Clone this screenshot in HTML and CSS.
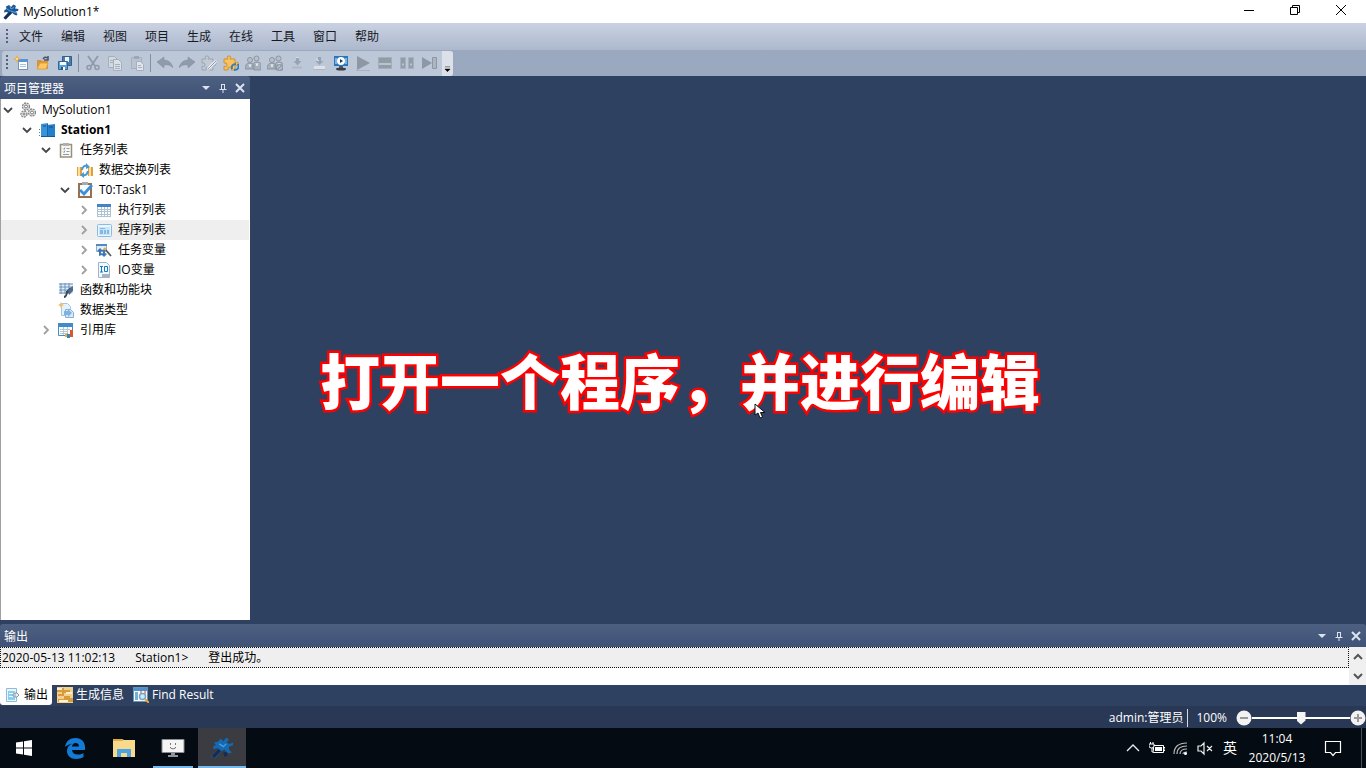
FILE: index.html
```html
<!DOCTYPE html>
<html lang="zh-CN">
<head>
<meta charset="utf-8">
<title>MySolution1*</title>
<link rel="stylesheet" href="styles.css">
</head>
<body>
<svg class="sprite" aria-hidden="true">
  <symbol id="logo" viewBox="0 0 16 16"><path d="M6 1l2 2 2.500-2.500L13 2l-1 2.500 3.500.500-.5 2-2.500.5 2 2.500-1 1.500-2.500-1-1.500-1.500-2 1L3 15.500.5 14l4.500-5.500L3.500 8 1 8.500l.5-2.500 2-1L3 2.500z" fill="#1c5795"/><path d="M7 2l1 3 3-1.500M4 5l3 2 4 1 3 1" fill="none" stroke="#5fa0dc"/><path d="M1.500 14.500L8 8.500" stroke="#17304f" stroke-width="2.500"/></symbol>
  <symbol id="new" viewBox="0 0 16 16"><rect x="5.500" y="4.500" width="9" height="10" fill="#fff" stroke="#7792b5"/><path d="M5 4h10v3H5z" fill="#5d94cf"/><path d="M7 9.500h6M7 11.500h6" stroke="#a4c6e4"/><path d="M4 0l1 3 3 1-3 1-1 3-1-3-3-1 3-1z" fill="#f3a72f"/><circle cx="4" cy="4" r="1" fill="#fff0a0"/></symbol>
  <symbol id="open" viewBox="0 0 16 16"><path d="M2 14V5h4l1 1h6v8z" fill="#d5943a"/><path d="M2 14l3-6h8l-2 6z" fill="#ffc867" stroke="#e49e37"/><path d="M8 4q2-3 4-1M9 5h4V1" fill="none" stroke="#4c5260" stroke-width="1.500"/></symbol>
  <symbol id="save" viewBox="0 0 16 16"><path d="M5.500 1.500h9v9h-9z" fill="#447ead" stroke="#315e8d"/><path d="M8 2h4v5H8z" fill="#eef5fb"/><path d="M1.500 6.500h9v8h-9z" fill="#58a4da" stroke="#2f6697"/><path d="M3 7h6v3H3zM4 12h4v3H4z" fill="#fff"/><path d="M4 12h2v3H4z" fill="#305577"/></symbol>
  <symbol id="cut" viewBox="0 0 16 16"><path d="M3 1l7 10M13 1L6 11" stroke="#8f99a7" stroke-width="1.800"/><circle cx="4" cy="12.500" r="2" fill="none" stroke="#8f99a7" stroke-width="1.500"/><circle cx="12" cy="12.500" r="2" fill="none" stroke="#8f99a7" stroke-width="1.500"/></symbol>
  <symbol id="copy" viewBox="0 0 16 16"><path d="M1.500 1.500h6l3 3v8h-9z" fill="#d0d8e2" stroke="#a5afbc"/><path d="M6.500 4.500h5l3 3v8h-8z" fill="#dae0e7" stroke="#a5afbc"/><path d="M3 5.500h3M3 7.500h3M8 9.500h5M8 11.500h5M8 13.500h5" stroke="#a5afbc"/></symbol>
  <symbol id="paste" viewBox="0 0 16 16"><path d="M2.500 2.500h10v11h-10z" fill="#b9c3cf" stroke="#a5afbd"/><path d="M5 1h5v3H5z" fill="#9da7b5"/><path d="M7.500 6.500h4l3 3v6h-7z" fill="#e0e5eb" stroke="#a5afbd"/><path d="M9 10.500h3M9 12.500h4" stroke="#a5afbd"/></symbol>
  <symbol id="undo" viewBox="0 0 16 16"><path d="M0 7l7-5v3q7 0 9 8-3-4-9-3v3z" fill="#909baa" stroke="#808b99" stroke-width=".5"/></symbol>
  <symbol id="redo" viewBox="0 0 16 16"><path d="M16 7L9 2v3q-7 0-9 8 3-4 9-3v3z" fill="#909baa" stroke="#808b99" stroke-width=".5"/></symbol>
  <symbol id="puzzle" viewBox="0 0 16 16"><path d="M1 4h4Q3 1 6 1t1 3h5v4q4-2 3 1t-3 1v5H8q2-3-1-3t-2 3H1v-4q3 2 3-1T1 8z" fill="#c2cad5" stroke="#9aa5b3"/><path d="M7 14l8-8" stroke="#e9edf2" stroke-width="3"/><path d="M7 14l8-8" stroke="#929dab"/></symbol>
  <symbol id="puzzlec" viewBox="0 0 16 16"><path d="M1 4h4Q3 1 6 1t1 3h5v4q4-2 3 1t-3 1v5H8q2-3-1-3t-2 3H1v-4q3 2 3-1T1 8z" fill="#fac15c" stroke="#cf922e"/><path d="M9 14q-1-5 4-5M15 9q2 6-4 6" stroke="#327ebd" stroke-width="2" fill="none"/></symbol>
  <symbol id="people" viewBox="0 0 16 16"><circle cx="5" cy="5" r="2.500" fill="#b8c0ca" stroke="#8b96a4"/><circle cx="11.500" cy="3.500" r="2.500" fill="#b8c0ca" stroke="#8b96a4"/><path d="M0 14q0-6 5-6t4 6zM8 13q-1-6 4-6t4 5v3H9z" fill="#a7b0bc" stroke="#8b96a4"/><path d="M4 9l1 3 1-3M11 8l1 3 1-3" stroke="#e3e8ed" fill="none"/></symbol>
  <symbol id="peoplex" viewBox="0 0 16 16"><use href="#people"/><circle cx="12.500" cy="12.500" r="3" fill="#b3bcc7" stroke="#8591a0"/><path d="M10.500 14.500l4-4" stroke="#8591a0"/></symbol>
  <symbol id="down" viewBox="0 0 16 16"><path d="M7 2h3v4h2.500l-4 4.500-4-4.500H7z" fill="#98a3b1"/><path d="M3 12.500h10" stroke="#aeb7c3" stroke-width="2"/><path d="M7 2.500h3" stroke="#d4dbe3"/></symbol>
  <symbol id="down2" viewBox="0 0 16 16"><path d="M7 2h3v4h2.500l-4 4-4-4H7z" fill="#98a3b1"/><path d="M3 11h11v3H3z" fill="#dce2e8"/><path d="M3 14.500h11" stroke="#aeb7c3"/><path d="M5 4l3 2" stroke="#dce2e9"/></symbol>
  <symbol id="monitor" viewBox="0 0 16 16"><path d="M1 1h14v10H1z" fill="#2777bf"/><circle cx="8" cy="6" r="4" fill="#fff"/><path d="M7 4v4l3-2z" fill="#16395e"/><path d="M3 3v6M13 3v6" stroke="#e1efff"/><path d="M6 11h4v2H6z" fill="#555c66"/><ellipse cx="8" cy="14" rx="5" ry="1.500" fill="#383f4a"/></symbol>
  <symbol id="play" viewBox="0 0 16 16"><path d="M2 1l13 7-13 7z" fill="#8e98a5"/><path d="M1 15.500h14" stroke="#a8b1bd"/></symbol>
  <symbol id="stop" viewBox="0 0 16 16"><path d="M1.500 2.500h13v11h-13z" fill="#919ca9" stroke="#a4aeba"/><path d="M2 8h12v2H2z" fill="#bac3ce"/></symbol>
  <symbol id="pause" viewBox="0 0 16 16"><path d="M1.500 2.500h5v11h-5zM9.500 2.500h5v11h-5z" fill="#929dab" stroke="#a7b1bd"/><path d="M3 9.500h2M11 9.500h2" stroke="#b9c2cd" stroke-width="2"/></symbol>
  <symbol id="step" viewBox="0 0 16 16"><path d="M1 2l10 6-10 6z" fill="#8c98a6"/><path d="M11.500 2.500h4v11h-4z" fill="#acb6c1" stroke="#8c98a6"/></symbol>
  <symbol id="gears" viewBox="0 0 16 16"><g fill="#e8e8e8" stroke="#858585" stroke-width="1.300"><circle cx="6" cy="4.500" r="3.500" stroke-dasharray="2 .8"/><circle cx="4" cy="12" r="3" stroke-dasharray="2 .8"/><circle cx="12" cy="10.500" r="3.500" stroke-dasharray="2 .8"/></g><g fill="#fff" stroke="#777"><circle cx="6" cy="4.500" r="1.500"/><circle cx="12" cy="10.500" r="1.500"/><circle cx="4" cy="12" r="1"/></g></symbol>
  <symbol id="station" viewBox="0 0 16 16"><path d="M2 2l7-1v14H2z" fill="#3894d9"/><path d="M8 3l8-1v13H8z" fill="#2480cc"/><path d="M8.500 2v13" stroke="#1964a8"/><path d="M4 4h3M10 5h4" stroke="#174f87"/><path d="M2 14.500h14" stroke="#16598f"/><path d="M.5 7v1M.5 10v1M.5 13v1" stroke="#777"/></symbol>
  <symbol id="tasks" viewBox="0 0 16 16"><rect x="2.500" y="2.500" width="11" height="12.500" fill="#f9f9f7" stroke="#9c8e7a" stroke-width="1.500"/><path d="M5 1h6v3H5z" fill="#b2b2ad"/><path d="M5 6.500l1 1 1-2M5 9.500l1 1 1-2M8.500 6.500h3M8.500 9.500h3M5 12.500h6" stroke="#8b99a6" fill="none"/></symbol>
  <symbol id="swap" viewBox="0 0 16 16"><path d="M0 5h5v9H0zM11 5h5v9h-5z" fill="#e2a03c"/><path d="M2 5v9M13 5v9" stroke="#ffe09a" stroke-width="2"/><path d="M5 8q1-5 5-4M11 9q-1 5-5 4" stroke="#4c98d2" stroke-width="2" fill="none"/><path d="M9 1l4 4-4 2zM7 10l-4 3 4 3z" fill="#4c98d2"/></symbol>
  <symbol id="task" viewBox="0 0 16 16"><rect x="2" y="2" width="12" height="13" fill="#f6fbff" stroke="#99704d" stroke-width="2"/><path d="M5 0h6v3H5z" fill="#aaa"/><path d="M3 8l4 4 8-9" fill="none" stroke="#3d8fd7" stroke-width="2.800"/></symbol>
  <symbol id="grid" viewBox="0 0 16 16"><rect x="1" y="2" width="14" height="12.500" fill="#fff"/><path d="M1.500 2v12.500M5.500 5v9.500M8.500 5v9.500M11.500 5v9.500M14.500 5v9.500M1 7.500h14M1 9.500h14M1 12.500h14M1 14.500h14" stroke="#adc3d4"/><path d="M1 2h14v3H1z" fill="#4384c8"/></symbol>
  <symbol id="programs" viewBox="0 0 16 16"><rect x="1.500" y="2.500" width="14" height="12" rx="1" fill="#eaf5fe" stroke="#89bce5"/><path d="M3 5h11v8H3z" fill="#cae4f8"/><path d="M4 8h3v4H4zM8 8h2v4H8zM11 8h2v4h-2zM4 6h5v1H4z" fill="#82b9e5"/></symbol>
  <symbol id="vars" viewBox="0 0 16 16"><path d="M.5 3.500h10v6H.5z" fill="#e2effa" stroke="#93aec8"/><path d="M0 2h11v2H0z" fill="#5388c0"/><path d="M4 6l2 2 3-1v4l2 1-3 3-2-2-3 1V10L1 9z" fill="#3f79b3"/><circle cx="6" cy="10.500" r="1" fill="#fff"/><path d="M9 7l6 7" stroke="#555c63" stroke-width="1.800"/><path d="M8 6l2 2" stroke="#e0ac58" stroke-width="2"/></symbol>
  <symbol id="io" viewBox="0 0 16 16"><path d="M2.500.5h8l3 3v12h-11z" fill="#f1f8ff" stroke="#a0b4c5"/><path d="M4 4.500h3M5.500 5v5M4 10h3" stroke="#1979bd"/><path d="M8.500 4.500h3v5h-3z" fill="none" stroke="#1979bd"/><path d="M6 12h8v3H6z" fill="#a4b4c3"/></symbol>
  <symbol id="func" viewBox="0 0 16 16"><path d="M1 1h14v11H1z" fill="#e4f1fc"/><path d="M1 2h14M1 5h14M1 8h14M1 11h8M3 1v11M7 1v11M11 1v11" stroke="#6d92b5"/><path d="M6 15q2 0 3-4t5-5M8 10h5" stroke="#384859" stroke-width="1.800" fill="none"/><path d="M10 8l5-4v5l-4 4z" fill="#4c6d92"/></symbol>
  <symbol id="types" viewBox="0 0 16 16"><path d="M3.500 1.500h6l3 3v9h-9z" fill="#e5f1fb" stroke="#a4c7e1"/><path d="M7.500 7.500h5l3 3v5h-8z" fill="#d6eafc" stroke="#7fb1d8"/><path d="M3 0l1 2 2 1-2 1-1 2-1-2-2-1 2-1z" fill="#efbd68"/><path d="M6 9h4V7l4 4-4 4v-2H6z" fill="#81b2dc"/></symbol>
  <symbol id="library" viewBox="0 0 16 16"><path d="M.5 1.500h14v12H.5z" fill="#fff" stroke="#498bbf"/><path d="M0 1h15v4H0z" fill="#438bc8"/><path d="M2 7.500h10M2 9.500h8M2 11.500h8M5.500 5v8M9.500 5v8" stroke="#b1c9dc"/><path d="M7 12l3-1v4H7z" fill="#e2ad39"/><path d="M9 12h3v4H9z" fill="#3980bf"/><path d="M12 8h3v7h-3z" fill="#d9572e"/></symbol>
  <symbol id="output" viewBox="0 0 16 16"><path d="M1.500 1.500h10v13h-10z" fill="#eaf7ff" stroke="#8dbcd8"/><path d="M3 4h7v9H3z" fill="#8dcdec"/><path d="M4 6.500h4M4 9.500h4" stroke="#eefaff"/><path d="M8 7h3V5l3 3-3 3v-2H8z" fill="#eef2f5" stroke="#8b9ba6"/></symbol>
  <symbol id="build" viewBox="0 0 16 16"><path d="M0 0h16v16H0z" fill="#f3d18d"/><path d="M0 1h7v2h6v3H7v3H1V7h4V5H0zM1 12h6v-3h6v2h3v4H1z" fill="#d79b3d"/><path d="M0 2h5M9 6h6M2 14h9" stroke="#fff2cc" stroke-width="2"/></symbol>
  <symbol id="find" viewBox="0 0 16 16"><path d="M.5.500h14v14H.5z" fill="#f6faff" stroke="#6596ba"/><path d="M1 1h13v3H1z" fill="#4c91ca"/><path d="M2 5h3v8H2z" fill="#79aed4"/><path d="M8 4v5M12 4v5" stroke="#e07c70" stroke-width="1.500"/><circle cx="9.500" cy="9.500" r="3" fill="#c9eaff" stroke="#7ca5bf" stroke-width="1.500"/><path d="M12 12l4 4" stroke="#e3a43e" stroke-width="2"/></symbol>
  <symbol id="pin" viewBox="0 0 10 10"><path d="M3.500 1v5M6.500 1v5M3 1.500h4M1.500 6.500h7M5 7v3" fill="none" stroke="currentColor"/></symbol>
  <symbol id="close" viewBox="0 0 10 10"><path d="M1 1l8 8M9 1L1 9" stroke="currentColor" stroke-width="2"/></symbol>
  <symbol id="drop" viewBox="0 0 10 10"><path d="M1 3h8L5 7z" fill="currentColor"/></symbol>
  <symbol id="expanded" viewBox="0 0 12 12"><path d="M2 4l4 4 4-4" fill="none" stroke="#45454b" stroke-width="1.800"/></symbol>
  <symbol id="collapsed" viewBox="0 0 12 12"><path d="M4 2l4 4-4 4" fill="none" stroke="#a0a0a0" stroke-width="1.800"/></symbol>
</svg>

<div class="app">
  <header class="titlebar">
    <svg class="icon"><use href="#logo"/></svg>
    <h1 class="title">MySolution1*</h1>
    <div class="window-buttons">
      <button aria-label="最小化"><svg viewBox="0 0 12 12"><path d="M1 6.500h10" stroke="#000"/></svg></button>
      <button aria-label="还原"><svg viewBox="0 0 12 12"><path d="M1.500 3.500h7v7h-7zM3.500 3V1.500h7v7H9" fill="none" stroke="#000"/></svg></button>
      <button aria-label="关闭"><svg viewBox="0 0 12 12"><path d="M1 1l10 10M11 1L1 11" stroke="#000"/></svg></button>
    </div>
  </header>

  <nav class="menubar">
    <span class="grip"></span>
    <button>文件</button><button>编辑</button><button>视图</button><button>项目</button><button>生成</button><button>在线</button><button>工具</button><button>窗口</button><button>帮助</button>
  </nav>

  <div class="toolbar-row">
    <div class="toolbar" role="toolbar">
      <span class="grip"></span>
      <button aria-label="新建"><svg class="icon"><use href="#new"/></svg></button>
      <button aria-label="打开"><svg class="icon"><use href="#open"/></svg></button>
      <button aria-label="保存"><svg class="icon"><use href="#save"/></svg></button>
      <span class="separator"></span>
      <button aria-label="剪切"><svg class="icon"><use href="#cut"/></svg></button>
      <button aria-label="复制"><svg class="icon"><use href="#copy"/></svg></button>
      <button aria-label="粘贴"><svg class="icon"><use href="#paste"/></svg></button>
      <span class="separator"></span>
      <button aria-label="撤销"><svg class="icon"><use href="#undo"/></svg></button>
      <button aria-label="重做"><svg class="icon"><use href="#redo"/></svg></button>
      <button aria-label="编译"><svg class="icon"><use href="#puzzle"/></svg></button>
      <button aria-label="重新编译"><svg class="icon"><use href="#puzzlec"/></svg></button>
      <button aria-label="登录"><svg class="icon"><use href="#people"/></svg></button>
      <button aria-label="登出"><svg class="icon"><use href="#peoplex"/></svg></button>
      <button aria-label="下载"><svg class="icon"><use href="#down"/></svg></button>
      <button aria-label="下载到设备"><svg class="icon"><use href="#down2"/></svg></button>
      <button aria-label="仿真"><svg class="icon"><use href="#monitor"/></svg></button>
      <button aria-label="运行"><svg class="icon"><use href="#play"/></svg></button>
      <button aria-label="停止"><svg class="icon"><use href="#stop"/></svg></button>
      <button aria-label="暂停"><svg class="icon"><use href="#pause"/></svg></button>
      <button aria-label="单步"><svg class="icon"><use href="#step"/></svg></button>
      <button class="overflow" aria-label="更多"><svg viewBox="0 0 8 8"><path d="M1 1.500h6M1 4h6L4 7z" stroke="#000" stroke-width=".5"/></svg></button>
    </div>
  </div>

  <main class="workspace">
    <aside class="explorer">
      <div class="panel-head"><h2>项目管理器</h2>
        <button aria-label="菜单"><svg><use href="#drop"/></svg></button><button aria-label="固定"><svg><use href="#pin"/></svg></button><button aria-label="关闭"><svg><use href="#close"/></svg></button>
      </div>
      <ul class="tree">
        <li class="l0"><svg class="chev"><use href="#expanded"/></svg><svg class="icon"><use href="#gears"/></svg><span>MySolution1</span></li>
        <li class="l1"><svg class="chev"><use href="#expanded"/></svg><svg class="icon"><use href="#station"/></svg><strong>Station1</strong></li>
        <li class="l2"><svg class="chev"><use href="#expanded"/></svg><svg class="icon"><use href="#tasks"/></svg><span>任务列表</span></li>
        <li class="l3"><svg class="chev"></svg><svg class="icon"><use href="#swap"/></svg><span>数据交换列表</span></li>
        <li class="l3"><svg class="chev"><use href="#expanded"/></svg><svg class="icon"><use href="#task"/></svg><span>T0:Task1</span></li>
        <li class="l4"><svg class="chev"><use href="#collapsed"/></svg><svg class="icon"><use href="#grid"/></svg><span>执行列表</span></li>
        <li class="l4 selected"><svg class="chev"><use href="#collapsed"/></svg><svg class="icon"><use href="#programs"/></svg><span>程序列表</span></li>
        <li class="l4"><svg class="chev"><use href="#collapsed"/></svg><svg class="icon"><use href="#vars"/></svg><span>任务变量</span></li>
        <li class="l4"><svg class="chev"><use href="#collapsed"/></svg><svg class="icon"><use href="#io"/></svg><span>IO变量</span></li>
        <li class="l2"><svg class="chev"></svg><svg class="icon"><use href="#func"/></svg><span>函数和功能块</span></li>
        <li class="l2"><svg class="chev"></svg><svg class="icon"><use href="#types"/></svg><span>数据类型</span></li>
        <li class="l2"><svg class="chev"><use href="#collapsed"/></svg><svg class="icon"><use href="#library"/></svg><span>引用库</span></li>
      </ul>
    </aside>
  </main>

  <section class="output">
    <div class="panel-head"><h2>输出</h2>
      <button aria-label="菜单"><svg><use href="#drop"/></svg></button><button aria-label="固定"><svg><use href="#pin"/></svg></button><button aria-label="关闭"><svg><use href="#close"/></svg></button>
    </div>
    <div class="log">
      <div class="log-line"><span>2020-05-13 11:02:13</span><span>Station1&gt;</span><span>登出成功。</span></div>
      <div class="scroll">
        <button aria-label="向上滚动"><svg viewBox="0 0 10 8"><path d="M1 6l4-4 4 4" fill="none" stroke="#555" stroke-width="2"/></svg></button>
        <button aria-label="向下滚动"><svg viewBox="0 0 10 8"><path d="M1 2l4 4 4-4" fill="none" stroke="#555" stroke-width="2"/></svg></button>
      </div>
    </div>
    <div class="tabs">
      <button class="active"><svg class="icon"><use href="#output"/></svg>输出</button>
      <button><svg class="icon"><use href="#build"/></svg>生成信息</button>
      <button><svg class="icon"><use href="#find"/></svg>Find Result</button>
    </div>
  </section>

  <footer class="status">
    <span class="user">admin:管理员</span>
    <label for="zoom">100%</label>
    <div class="zoom">
      <button aria-label="缩小"><svg viewBox="0 0 16 16"><circle cx="8" cy="8" r="7.500" fill="#f2f2f2"/><path d="M4 8h8" stroke="#999" stroke-width="2"/></svg></button>
      <input id="zoom" type="range" min="0" max="200" value="100">
      <button aria-label="放大"><svg viewBox="0 0 16 16"><circle cx="8" cy="8" r="7.500" fill="#f2f2f2"/><path d="M4 8h8M8 4v8" stroke="#999" stroke-width="2"/></svg></button>
    </div>
  </footer>

  <div class="taskbar">
    <button aria-label="开始"><svg class="start" viewBox="0 0 16 16"><path d="M0 2.500L7 1.500V7.500H0zM8 1.300L16 0v7.500H8zM0 8.500h7v6l-7-1zM8 8.500h8V16l-8-1.300z" fill="#fff"/></svg></button>
    <button class="gap" aria-label="Edge"><svg class="app-icon" viewBox="0 0 22 22"><path d="M1 10C2 4 6 1 11.500 1 18 1 21 5.500 21 10v3H8c.3 3 2.500 4.500 5.500 4.500 2.500 0 4.500-.7 6-1.600v4.200C17.500 21.300 15 22 12.200 22 6.500 22 3 18.500 3 14c0-3.500 1.800-6 5-7.300C5 7 2.500 8.500 1 10zm7-.5h7C15 7 13.500 6 11.500 6S8.300 7.500 8 9.500z" fill="#127bd5"/></svg></button>
    <button aria-label="文件资源管理器"><svg class="app-icon" viewBox="0 0 22 22"><path d="M0 2h9l2 1h11v17H0z" fill="#f9d98b"/><path d="M0 2h9l1 2H0z" fill="#e2aa43"/><path d="M4 20v-8h14v8h-4v-4H8v4z" fill="#4ba5e4"/></svg></button>
    <button class="running" aria-label="录屏"><svg class="wide-icon" viewBox="0 0 24 20"><path d="M1 1.500h22v13H1z" fill="#f5f5f5" stroke="#8a8e92"/><path d="M10 15h4v2h3v2H7v-2h3z" fill="#91959a"/><path d="M9.500 5v2M14.500 5v2M9.500 9v1q2.500 2 5 0V9" fill="none" stroke="#777"/></svg></button>
    <button class="running current" aria-label="MySolution1"><svg class="app-icon" viewBox="0 0 16 16"><path d="M7 1l2 2 2-2.500 2 1-1.500 2.500 2 1L16 4v2l-3 1v2l2 2-1 1-3-1-1-2-2 1-5 5.500L0 14l5.500-5.500L4 8l-2 1-.5-2 2-1.500L2 4l3-.5z" fill="#1469b3"/><path d="M1.500 14.500L6.500 9.500M10 11l1 3" stroke="#172c50" stroke-width="2.500"/><path d="M6 5l3 2 2-2" fill="none" stroke="#4d9be0"/></svg></button>
    <div class="tray">
      <svg class="tray-icon" viewBox="0 0 16 16"><path d="M2 11l6-6 6 6" fill="none" stroke="#eee" stroke-width="1.300"/></svg>
      <svg class="tray-icon" viewBox="0 0 16 16"><path d="M4.500 5.500h10v7h-10zM15 7.500h1v3h-1" fill="none" stroke="#fff"/><path d="M6 7h7v4H6z" fill="#fff"/><path d="M0 4h5v2q0 2-2.500 2T0 6zM1.500 2v2M4 2v2M3 8v4h2" fill="#071018" stroke="#fff"/></svg>
      <svg class="tray-icon" viewBox="0 0 16 16"><path d="M1 14Q1 3 14 3M4 14Q4 6 14 6M7 14q0-5 7-5M10 14q0-2 4-2" fill="none" stroke="#bbb" stroke-width="1.200"/><circle cx="12.500" cy="13.500" r="1.500" fill="#fff"/></svg>
      <svg class="tray-icon" viewBox="0 0 16 16"><path d="M1 6h3l3-3v11l-3-3H1zM10 6l5 5M15 6l-5 5" fill="none" stroke="#eee" stroke-width="1.200"/></svg>
      <span class="ime">英</span>
      <div class="clock"><span>11:04</span><span>2020/5/13</span></div>
      <svg class="notice" viewBox="0 0 18 18"><path d="M1.500 2.500h15v11h-5l-2.500 3-2.500-3h-5z" fill="none" stroke="#fff" stroke-width="1.200"/></svg>
      <span class="show-desktop"></span>
    </div>
  </div>
</div>
<p class="caption">打开一个程序，并进行编辑</p>
<svg class="pointer" viewBox="0 0 12 16"><path d="M1 1v11l3-2 2 5 2.500-1-2-4.500H11z" fill="#fff" stroke="#111"/></svg>
</body>
</html>
```
FILE: styles.css
```css
* { box-sizing: border-box; }
body {
  margin: 0;
  font: 12px/20px "Open Sans", "Noto Sans CJK SC", sans-serif;
  color: #000;
  background: #2f4160;
  overflow: hidden;
}
button { margin: 0; padding: 0; border: 0; background: none; font: inherit; color: inherit; }
h1, h2, p, ul { margin: 0; padding: 0; font: inherit; list-style: none; }
svg { display: block; flex: none; }
.sprite { position: absolute; width: 0; height: 0; }
.icon { width: 16px; height: 16px; }
.app { min-height: 100vh; display: flex; flex-direction: column; }

.titlebar { height: 23px; display: flex; align-items: center; padding: 0 2px 0 3px; gap: 4px; background: #fff; }
.title { flex: 1; }
.window-buttons { display: flex; align-self: flex-start; height: 20px; }
.window-buttons button { width: 46px; display: grid; place-items: center; }
.window-buttons svg { width: 12px; height: 12px; }

.menubar { height: 27px; display: flex; align-items: center; padding-left: 6px; background: linear-gradient(#cad2e2, #adb8cd); color: #17191f; }
.menubar button { width: 42px; }
.grip { width: 4px; height: 15px; background: repeating-linear-gradient(#56607c 0 2px, transparent 2px 4px) 0 0 / 2px 100% no-repeat; }
.toolbar-row { height: 26px; padding-left: 2px; display: flex; background: #9ba9c0; }
.toolbar { display: flex; align-items: center; height: 25px; margin-top: 1px; padding: 0 0 2px 4px; background: #bcc7d8; border-radius: 3px; }
.toolbar button { width: 22px; height: 22px; display: grid; place-items: center; }
.separator { width: 6px; height: 18px; background: linear-gradient(#8290a6, #8290a6) 2px 0 / 1px 100% no-repeat; }
.toolbar .overflow { width: 11px; height: 25px; margin: 0 0 -2px 2px; padding-bottom: 3px; background: #dce0e8; place-items: end center; border-radius: 0 3px 3px 0; }
.overflow svg { width: 7px; height: 8px; }

.workspace { flex: 1; display: flex; padding-bottom: 4px; }
.explorer { width: 250px; display: flex; flex-direction: column; }
.panel-head { height: 23px; display: flex; align-items: center; padding: 0 5px 0 4px; gap: 7px; color: #fff; background: linear-gradient(#4d6082, #3f5376); border-radius: 3px 3px 0 0; }
.panel-head h2 { flex: 1; padding-top: 2px; }
.panel-head button { width: 10px; color: #dce3ef; }
.panel-head svg { width: 10px; height: 10px; }
.tree { flex: 1; background: #fff; border-left: 1px solid #a0a0a0; border-right: 1px solid #fff; padding-top: 1px; }
.tree li { height: 20px; display: flex; align-items: center; white-space: nowrap; }
.chev { width: 12px; height: 12px; margin-right: 6px; }
.tree .icon { margin-right: 6px; }
.l0 { padding-left: 1px; }
.l1 { padding-left: 20px; }
.l2 { padding-left: 39px; }
.l3 { padding-left: 58px; }
.l4 { padding-left: 77px; }
.selected { background: #efefef; }

.log { height: 38px; display: flex; background: #fff; }
.log-line { flex: 1; height: 21px; display: flex; align-items: center; gap: 20px; padding: 0 1px; background: #efefef; border: 1px dotted #111; }
.scroll { width: 17px; display: grid; background: #f0f0f0; }
.scroll button { display: grid; place-items: center; }
.scroll svg { width: 10px; height: 8px; }
.tabs { height: 21px; display: flex; color: #fff; background: #2f4160; }
.tabs button { height: 20px; display: flex; align-items: center; gap: 3px; padding: 0 4px 0 5px; }
.tabs .active { color: #000; background: #fff; border-radius: 0 0 3px 3px; }

.status { height: 22px; padding-top: 2px; display: flex; align-items: center; justify-content: flex-end; color: #fff; background: #293955; }
.user { padding-right: 4px; border-right: 1px solid #d5dae3; line-height: 18px; }
.status label { padding: 0 9px 0 8px; }
.zoom { display: flex; align-items: center; }
.zoom svg { width: 16px; height: 16px; }
.zoom input { width: 98px; height: 16px; margin: 0; appearance: none; background: linear-gradient(#fff, #fff) center / 100% 2px no-repeat; }
.zoom input::-webkit-slider-thumb { appearance: none; width: 9px; height: 13px; background: #f4f4f4; clip-path: polygon(0 0, 100% 0, 100% 70%, 50% 100%, 0 70%); }

.taskbar { height: 40px; display: flex; background: #050b12; color: #fff; }
.taskbar button { width: 48px; display: grid; place-items: center; }
.taskbar .gap { margin: 0 1px 0 3px; }
.start { width: 16px; height: 16px; }
.app-icon { width: 22px; height: 22px; }
.wide-icon { width: 24px; height: 20px; }
.taskbar .running { width: 40px; margin: 0 5px; border-bottom: 2px solid #76b9ed; padding-top: 2px; }
.taskbar .current { width: 48px; margin: 0; background: #3b3c42; }
.tray { margin-left: auto; display: flex; align-items: center; }
.tray-icon { width: 16px; height: 16px; margin-right: 8px; }
.ime { font-size: 14px; margin: 0 8px 0 2px; }
.clock { width: 64px; display: grid; line-height: 19px; text-align: center; }
.notice { width: 18px; height: 18px; margin-left: 15px; }
.show-desktop { width: 5px; height: 40px; margin-left: 19px; border-left: 1px solid #4b5055; }

.caption {
  position: absolute; left: 320px; top: 335px;
  font: 900 60px/88px "Noto Sans CJK SC", sans-serif;
  color: #fff; white-space: nowrap;
  -webkit-text-stroke: 5px #f00; paint-order: stroke fill;
}
.pointer { position: absolute; left: 754px; top: 403px; width: 12px; height: 16px; }
```
